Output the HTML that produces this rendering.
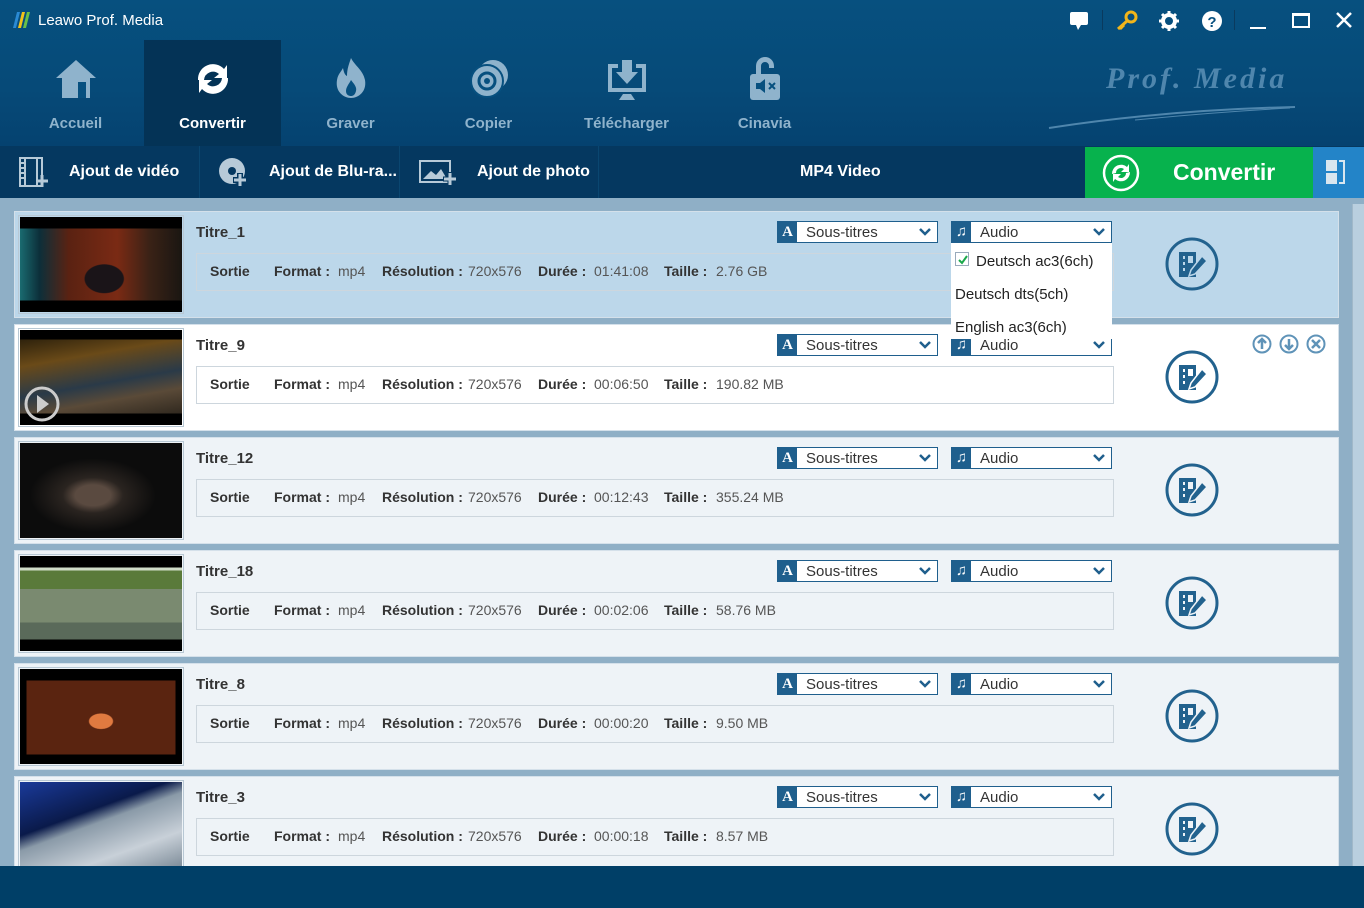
<!DOCTYPE html>
<html><head><meta charset="utf-8"><style>
*{margin:0;padding:0;box-sizing:border-box}
body{width:1364px;height:908px;overflow:hidden;font-family:"Liberation Sans",sans-serif;background:#8fafc6;position:relative}
.abs{position:absolute}
#top{left:0;top:0;width:1364px;height:146px;background:linear-gradient(#07507f,#064a78 60%,#054270)}
.nav{position:absolute;top:40px;width:137px;height:106px;text-align:center;color:#8fb3cc;font-weight:bold;font-size:15px}
.nav .lbl{position:absolute;left:0;right:0;top:75px}
.nav svg{position:absolute;left:46px;top:16px}
#tb{left:0;top:146px;width:1364px;height:52px;background:#053860}
.tbi{position:absolute;top:0;height:52px;border-right:1px solid #0a4670;color:#fff;font-weight:bold;font-size:16px;line-height:52px}
.row{position:absolute;left:14px;width:1325px;height:107px;background:#eef3f7;border:1px solid #d4e0ea}
.thumb{position:absolute;left:3px;top:3px;width:166px;height:99px;border:1px solid #b8c8d4;padding:1px}
.thumb div{width:162px;height:95px}
.title{position:absolute;left:181px;top:12px;font-weight:bold;font-size:15px;color:#333}
.dd{position:absolute;top:9px;width:161px;height:22px;background:#fff;border:1px solid #1f5f8d}
.dd .ic{position:absolute;left:0;top:0;width:19px;height:20px;background:#1f5f8d;color:#fff;font-family:"Liberation Serif",serif;font-weight:bold;font-size:15px;text-align:center;line-height:20px}
.dd .t{position:absolute;left:28px;top:2px;font-size:15px;color:#333}
.dd svg{position:absolute;right:6px;top:6px}
.info{position:absolute;left:181px;top:41px;width:918px;height:38px;border:1px solid #cdd6dd;font-size:14px;color:#333;line-height:34px}
.info span{position:absolute;top:0}
.b{font-weight:bold}
.v{color:#555}
.edit{position:absolute;left:1150px;top:25px}
</style></head><body>
<div id="top" class="abs">
 <svg class="abs" style="left:12px;top:11px" width="20" height="18"><path d="M1 17L5 1h3L4 17z" fill="#2a8ad4"/><path d="M6 17L10 1h3L9 17z" fill="#f3c21a"/><path d="M11 17L15 1h3L14 17z" fill="#6ac04a"/></svg>
 <div class="abs" style="left:38px;top:12px;color:#fff;font-size:15px">Leawo Prof. Media</div>
 <svg class="abs" style="left:1068px;top:10px" width="24" height="22"><rect x="2" y="2" width="18" height="13" rx="2" fill="#fff"/><path d="M8 15l2 5 3-5z" fill="#fff"/></svg>
 <div class="abs" style="left:1102px;top:10px;width:1px;height:20px;background:#0a3a5e"></div>
 <svg class="abs" style="left:1115px;top:9px" width="24" height="22"><circle cx="16" cy="8" r="5" fill="none" stroke="#f2b51a" stroke-width="3"/><path d="M12 12l-9 8M5 18l2 2M7 16l2 2" stroke="#f2b51a" stroke-width="3"/></svg>
 <svg class="abs" style="left:1158px;top:10px" width="22" height="22"><circle cx="11" cy="11" r="6" fill="none" stroke="#fff" stroke-width="4"/><g stroke="#fff" stroke-width="3"><path d="M11 1v4M11 17v4M1 11h4M17 11h4M4 4l3 3M15 15l3 3M4 18l3-3M15 7l3-3"/></g></svg>
 <svg class="abs" style="left:1201px;top:10px" width="22" height="22"><circle cx="11" cy="11" r="10" fill="#fff"/><text x="11" y="17" text-anchor="middle" font-family="Liberation Sans" font-weight="bold" font-size="15" fill="#07507f">?</text></svg>
 <div class="abs" style="left:1234px;top:10px;width:1px;height:20px;background:#0a3a5e"></div>
 <div class="abs" style="left:1250px;top:27px;width:16px;height:2px;background:#fff"></div>
 <div class="abs" style="left:1292px;top:13px;width:18px;height:15px;border:2px solid #fff;border-top-width:3px"></div>
 <svg class="abs" style="left:1335px;top:11px" width="18" height="18"><path d="M2 2L16 16M16 2L2 16" stroke="#fff" stroke-width="2.5"/></svg>
 <div class="abs" style="left:1106px;top:62px;color:#4f86ad;font-family:'Liberation Serif',serif;font-style:italic;font-weight:bold;font-size:30px;letter-spacing:3px">Prof. Media</div>
 <svg class="abs" style="left:1045px;top:100px" width="260" height="32"><path d="M4 28Q120 10 250 7" stroke="#4f86ad" stroke-width="2" fill="none"/><path d="M90 20Q170 12 245 8" stroke="#4f86ad" stroke-width="1" fill="none"/></svg>

 <div class="nav" style="left:7px"><svg width="46" height="46" viewBox="0 0 46 46"><path d="M23 4L3 22h6v20h28V22h6z" fill="#8fb3cc"/><rect x="25" y="26" width="8" height="16" fill="#07507f"/></svg><div class="lbl">Accueil</div></div>
 <div class="nav" style="left:144px;background:#043356;color:#fff"><svg width="46" height="46" viewBox="0 0 46 46"><path d="M8 24a15 15 0 0 1 26-11l3-4v13H24l5-4a9 9 0 0 0-15 6z" fill="#fff"/><path d="M38 22a15 15 0 0 1-26 11l-3 4V24h13l-5 4a9 9 0 0 0 15-6z" fill="#fff"/></svg><div class="lbl">Convertir</div></div>
 <div class="nav" style="left:282px"><svg width="46" height="46" viewBox="0 0 46 46"><path d="M23 2c4 8 12 12 14 22 2 12-7 18-14 18S7 36 9 24c1-6 4-8 6-12 1 5 2 7 4 8 0-7 2-12 4-18z" fill="#8fb3cc"/><path d="M23 24c3 4 6 7 5 11s-3 5-5 5-5-1-5-5 3-7 5-11z" fill="#07507f"/></svg><div class="lbl">Graver</div></div>
 <div class="nav" style="left:420px"><svg width="46" height="46" viewBox="0 0 46 46"><circle cx="27" cy="19" r="15" fill="#8fb3cc"/><circle cx="21" cy="25" r="16" fill="#8fb3cc" stroke="#07507f" stroke-width="2"/><circle cx="21" cy="25" r="8" fill="none" stroke="#07507f" stroke-width="3"/><circle cx="21" cy="25" r="3" fill="#07507f"/></svg><div class="lbl">Copier</div></div>
 <div class="nav" style="left:558px"><svg width="46" height="46" viewBox="0 0 46 46"><path d="M4 8h10v4H8v20h30V12h-6V8h10v28H4z" fill="#8fb3cc"/><path d="M18 4h10v12h6L23 28 12 16h6z" fill="#8fb3cc"/><path d="M15 44l4-6h8l4 6z" fill="#8fb3cc"/></svg><div class="lbl">Télécharger</div></div>
 <div class="nav" style="left:696px"><svg width="46" height="46" viewBox="0 0 46 46"><path d="M14 18V10a9 9 0 0 1 18 0v2h-5v-2a4 4 0 0 0-8 0v8z" fill="#8fb3cc"/><rect x="8" y="18" width="30" height="26" rx="3" fill="#8fb3cc"/><path d="M14 27h4l5-4v14l-5-4h-4z" fill="#07507f"/><path d="M27 27l6 6M33 27l-6 6" stroke="#07507f" stroke-width="2"/></svg><div class="lbl">Cinavia</div></div>
</div>

<div id="tb" class="abs">
 <div class="tbi" style="left:0;width:200px"><svg class="abs" style="left:18px;top:11px" width="32" height="32"><rect x="2" y="1" width="22" height="28" fill="none" stroke="#b7cad8" stroke-width="2"/><path d="M7 1v28M19 1v28" stroke="#b7cad8" stroke-width="2"/><path d="M2 6h5M2 11h5M2 16h5M2 21h5" stroke="#b7cad8" stroke-width="2"/><path d="M24 18v12M18 24h12" stroke="#b7cad8" stroke-width="3"/></svg><span style="position:absolute;left:69px">Ajout de vidéo</span></div>
 <div class="tbi" style="left:200px;width:200px"><svg class="abs" style="left:18px;top:11px" width="32" height="32"><circle cx="14" cy="14" r="13" fill="#b7cad8"/><circle cx="14" cy="14" r="4" fill="#053860"/><path d="M22 16v14M15 23h14" stroke="#053860" stroke-width="6"/><path d="M22 17v12M16 23h12" stroke="#b7cad8" stroke-width="3"/></svg><span style="position:absolute;left:69px">Ajout de Blu-ra...</span></div>
 <div class="tbi" style="left:400px;width:199px"><svg class="abs" style="left:18px;top:12px" width="40" height="30"><rect x="2" y="3" width="30" height="21" fill="none" stroke="#b7cad8" stroke-width="2"/><path d="M5 21l8-8 5 4 5-6 6 10z" fill="#b7cad8"/><path d="M32 14v14M25 21h14" stroke="#053860" stroke-width="5"/><path d="M32 15v12M26 21h12" stroke="#b7cad8" stroke-width="3"/></svg><span style="position:absolute;left:77px">Ajout de photo</span></div>
 <div class="abs" style="left:800px;top:0;line-height:52px;color:#fff;font-weight:bold;font-size:16px">MP4 Video</div>
 <div class="abs" style="left:1085px;top:1px;width:228px;height:51px;background:#07b24d"><svg class="abs" style="left:17px;top:7px" width="38" height="38"><circle cx="19" cy="19" r="17" fill="none" stroke="#fff" stroke-width="2.5"/><path d="M10 20a9 9 0 0 1 15-7l2-3v8h-8l3-3a5 5 0 0 0-8 4z" fill="#fff"/><path d="M28 18a9 9 0 0 1-15 7l-2 3v-8h8l-3 3a5 5 0 0 0 8-4z" fill="#fff"/></svg><span class="abs" style="left:88px;top:0;line-height:51px;color:#fff;font-weight:bold;font-size:23px">Convertir</span></div>
 <div class="abs" style="left:1313px;top:1px;width:51px;height:51px;background:#2384c8"><div class="abs" style="left:13px;top:13px;width:11px;height:11px;background:#d9e6ef"></div><div class="abs" style="left:13px;top:26px;width:11px;height:11px;background:#d9e6ef"></div><div class="abs" style="left:26px;top:13px;width:6px;height:24px;border:2px solid #d9e6ef;border-left:none"></div></div>
</div>

<div class="abs" style="left:1352px;top:204px;width:12px;height:662px;background:#b9cfdf;border-left:1px solid #a0b8c9"></div>

<div class="row" style="top:211px;background:#bcd7ea">
 <div class="thumb"><div style="background:linear-gradient(#000 0 12%,transparent 12% 88%,#000 88%),radial-gradient(ellipse at 52% 65%,#1a1418 0 16%,transparent 17%),linear-gradient(90deg,#1a6b70 0%,#0c2f3a 12%,#5a2212 30%,#7a2a14 60%,#3a2216 80%,#1a1612)"></div></div>
 <div class="title">Titre_1</div>
 <div class="dd" style="left:762px"><div class="ic">A</div><div class="t">Sous-titres</div><svg width="12" height="8"><path d="M1 1l5 5 5-5" stroke="#1f5f8d" stroke-width="2.5" fill="none"/></svg></div>
 <div class="dd" style="left:936px"><div class="ic">♫</div><div class="t">Audio</div><svg width="12" height="8"><path d="M1 1l5 5 5-5" stroke="#1f5f8d" stroke-width="2.5" fill="none"/></svg></div>
 <div class="info"><span class="b" style="left:13px">Sortie</span><span class="b" style="left:77px">Format :</span><span class="v" style="left:141px">mp4</span><span class="b" style="left:185px">Résolution :</span><span class="v" style="left:271px">720x576</span><span class="b" style="left:341px">Durée :</span><span class="v" style="left:397px">01:41:08</span><span class="b" style="left:467px">Taille :</span><span class="v" style="left:519px">2.76 GB</span></div>
 <svg class="edit" width="56" height="56"><circle cx="27" cy="27" r="25" fill="none" stroke="#22628e" stroke-width="3"/><rect x="14" y="15" width="17" height="25" fill="#22628e"/><path d="M18 19h2v3h-2zM18 25h2v3h-2zM18 31h2v3h-2zM23 19h5v7h-5z" fill="#bcd7ea"/><path d="M37 19l5 5-12 13-6 2 2-6z" fill="#22628e" stroke="#bcd7ea" stroke-width="1.5"/></svg>
</div>

<div class="row" style="top:324px;background:#fff">
 <div class="thumb"><div style="position:relative;background:linear-gradient(#000 0 10%,transparent 10% 88%,#000 88%),linear-gradient(170deg,#1a1408 0%,#6a4a18 30%,#2a3a48 55%,#5a4a38 70%,#1e1a14 100%)"><svg style="position:absolute;left:3px;top:55px" width="38" height="38"><circle cx="19" cy="19" r="16" fill="none" stroke="#ccc" stroke-width="3"/><path d="M14 10l12 9-12 9z" fill="#ccc"/></svg></div></div>
 <div class="title">Titre_9</div>
 <div class="dd" style="left:762px"><div class="ic">A</div><div class="t">Sous-titres</div><svg width="12" height="8"><path d="M1 1l5 5 5-5" stroke="#1f5f8d" stroke-width="2.5" fill="none"/></svg></div>
 <div class="dd" style="left:936px"><div class="ic">♫</div><div class="t">Audio</div><svg width="12" height="8"><path d="M1 1l5 5 5-5" stroke="#1f5f8d" stroke-width="2.5" fill="none"/></svg></div>
 <div class="info"><span class="b" style="left:13px">Sortie</span><span class="b" style="left:77px">Format :</span><span class="v" style="left:141px">mp4</span><span class="b" style="left:185px">Résolution :</span><span class="v" style="left:271px">720x576</span><span class="b" style="left:341px">Durée :</span><span class="v" style="left:397px">00:06:50</span><span class="b" style="left:467px">Taille :</span><span class="v" style="left:519px">190.82 MB</span></div>
 <svg class="abs" style="left:1236px;top:9px" width="80" height="22"><g fill="none" stroke="#5f93b8" stroke-width="2"><circle cx="11" cy="10" r="8.5"/><circle cx="38" cy="10" r="8.5"/><circle cx="65" cy="10" r="8.5"/><path d="M11 15V5M7 9l4-4 4 4M38 5v10M34 11l4 4 4-4M61 6l8 8M69 6l-8 8" stroke-width="2.5"/></g></svg>
 <svg class="edit" width="56" height="56"><circle cx="27" cy="27" r="25" fill="none" stroke="#22628e" stroke-width="3"/><rect x="14" y="15" width="17" height="25" fill="#22628e"/><path d="M18 19h2v3h-2zM18 25h2v3h-2zM18 31h2v3h-2zM23 19h5v7h-5z" fill="#fff"/><path d="M37 19l5 5-12 13-6 2 2-6z" fill="#22628e" stroke="#fff" stroke-width="1.5"/></svg>
</div>

<div class="row" style="top:437px">
 <div class="thumb"><div style="background:radial-gradient(ellipse at 45% 55%,#5a4a40 0 14%,#2a2420 24%,#0c0c0c 50%),#000"></div></div>
 <div class="title">Titre_12</div>
 <div class="dd" style="left:762px"><div class="ic">A</div><div class="t">Sous-titres</div><svg width="12" height="8"><path d="M1 1l5 5 5-5" stroke="#1f5f8d" stroke-width="2.5" fill="none"/></svg></div>
 <div class="dd" style="left:936px"><div class="ic">♫</div><div class="t">Audio</div><svg width="12" height="8"><path d="M1 1l5 5 5-5" stroke="#1f5f8d" stroke-width="2.5" fill="none"/></svg></div>
 <div class="info"><span class="b" style="left:13px">Sortie</span><span class="b" style="left:77px">Format :</span><span class="v" style="left:141px">mp4</span><span class="b" style="left:185px">Résolution :</span><span class="v" style="left:271px">720x576</span><span class="b" style="left:341px">Durée :</span><span class="v" style="left:397px">00:12:43</span><span class="b" style="left:467px">Taille :</span><span class="v" style="left:519px">355.24 MB</span></div>
 <svg class="edit" width="56" height="56"><circle cx="27" cy="27" r="25" fill="none" stroke="#22628e" stroke-width="3"/><rect x="14" y="15" width="17" height="25" fill="#22628e"/><path d="M18 19h2v3h-2zM18 25h2v3h-2zM18 31h2v3h-2zM23 19h5v7h-5z" fill="#eef3f7"/><path d="M37 19l5 5-12 13-6 2 2-6z" fill="#22628e" stroke="#eef3f7" stroke-width="1.5"/></svg>
</div>

<div class="row" style="top:550px">
 <div class="thumb"><div style="background:linear-gradient(#000 0 12%,transparent 12% 88%,#000 88%),linear-gradient(#d0dcc8 0 15%,#5a7a3a 15% 35%,#7a8a70 35% 70%,#5a6a5a 70%)"></div></div>
 <div class="title">Titre_18</div>
 <div class="dd" style="left:762px"><div class="ic">A</div><div class="t">Sous-titres</div><svg width="12" height="8"><path d="M1 1l5 5 5-5" stroke="#1f5f8d" stroke-width="2.5" fill="none"/></svg></div>
 <div class="dd" style="left:936px"><div class="ic">♫</div><div class="t">Audio</div><svg width="12" height="8"><path d="M1 1l5 5 5-5" stroke="#1f5f8d" stroke-width="2.5" fill="none"/></svg></div>
 <div class="info"><span class="b" style="left:13px">Sortie</span><span class="b" style="left:77px">Format :</span><span class="v" style="left:141px">mp4</span><span class="b" style="left:185px">Résolution :</span><span class="v" style="left:271px">720x576</span><span class="b" style="left:341px">Durée :</span><span class="v" style="left:397px">00:02:06</span><span class="b" style="left:467px">Taille :</span><span class="v" style="left:519px">58.76 MB</span></div>
 <svg class="edit" width="56" height="56"><circle cx="27" cy="27" r="25" fill="none" stroke="#22628e" stroke-width="3"/><rect x="14" y="15" width="17" height="25" fill="#22628e"/><path d="M18 19h2v3h-2zM18 25h2v3h-2zM18 31h2v3h-2zM23 19h5v7h-5z" fill="#eef3f7"/><path d="M37 19l5 5-12 13-6 2 2-6z" fill="#22628e" stroke="#eef3f7" stroke-width="1.5"/></svg>
</div>

<div class="row" style="top:663px">
 <div class="thumb"><div style="background:radial-gradient(ellipse at 50% 55%,#e07a40 0 10%,transparent 11%),linear-gradient(#000 0 12%,transparent 12% 90%,#000 90%),linear-gradient(90deg,#000 0 4%,#5a2410 4% 96%,#000 96%)"></div></div>
 <div class="title">Titre_8</div>
 <div class="dd" style="left:762px"><div class="ic">A</div><div class="t">Sous-titres</div><svg width="12" height="8"><path d="M1 1l5 5 5-5" stroke="#1f5f8d" stroke-width="2.5" fill="none"/></svg></div>
 <div class="dd" style="left:936px"><div class="ic">♫</div><div class="t">Audio</div><svg width="12" height="8"><path d="M1 1l5 5 5-5" stroke="#1f5f8d" stroke-width="2.5" fill="none"/></svg></div>
 <div class="info"><span class="b" style="left:13px">Sortie</span><span class="b" style="left:77px">Format :</span><span class="v" style="left:141px">mp4</span><span class="b" style="left:185px">Résolution :</span><span class="v" style="left:271px">720x576</span><span class="b" style="left:341px">Durée :</span><span class="v" style="left:397px">00:00:20</span><span class="b" style="left:467px">Taille :</span><span class="v" style="left:519px">9.50 MB</span></div>
 <svg class="edit" width="56" height="56"><circle cx="27" cy="27" r="25" fill="none" stroke="#22628e" stroke-width="3"/><rect x="14" y="15" width="17" height="25" fill="#22628e"/><path d="M18 19h2v3h-2zM18 25h2v3h-2zM18 31h2v3h-2zM23 19h5v7h-5z" fill="#eef3f7"/><path d="M37 19l5 5-12 13-6 2 2-6z" fill="#22628e" stroke="#eef3f7" stroke-width="1.5"/></svg>
</div>

<div class="row" style="top:776px">
 <div class="thumb"><div style="background:linear-gradient(160deg,#1a3a9a 0%,#0a1a4a 35%,#8a9aa8 45%,#c8d0d8 70%,#6a7a88 100%)"></div></div>
 <div class="title">Titre_3</div>
 <div class="dd" style="left:762px"><div class="ic">A</div><div class="t">Sous-titres</div><svg width="12" height="8"><path d="M1 1l5 5 5-5" stroke="#1f5f8d" stroke-width="2.5" fill="none"/></svg></div>
 <div class="dd" style="left:936px"><div class="ic">♫</div><div class="t">Audio</div><svg width="12" height="8"><path d="M1 1l5 5 5-5" stroke="#1f5f8d" stroke-width="2.5" fill="none"/></svg></div>
 <div class="info"><span class="b" style="left:13px">Sortie</span><span class="b" style="left:77px">Format :</span><span class="v" style="left:141px">mp4</span><span class="b" style="left:185px">Résolution :</span><span class="v" style="left:271px">720x576</span><span class="b" style="left:341px">Durée :</span><span class="v" style="left:397px">00:00:18</span><span class="b" style="left:467px">Taille :</span><span class="v" style="left:519px">8.57 MB</span></div>
 <svg class="edit" width="56" height="56"><circle cx="27" cy="27" r="25" fill="none" stroke="#22628e" stroke-width="3"/><rect x="14" y="15" width="17" height="25" fill="#22628e"/><path d="M18 19h2v3h-2zM18 25h2v3h-2zM18 31h2v3h-2zM23 19h5v7h-5z" fill="#eef3f7"/><path d="M37 19l5 5-12 13-6 2 2-6z" fill="#22628e" stroke="#eef3f7" stroke-width="1.5"/></svg>
</div>

<div class="abs" style="left:951px;top:243px;width:161px;height:96px;background:#fff;font-size:15px;color:#222">
 <div class="abs" style="left:4px;top:9px;width:14px;height:14px;border:1px solid #9ab;background:#fff"><svg class="abs" style="left:1px;top:1px" width="12" height="12"><path d="M2 6l3 3 5-7" stroke="#1aa84a" stroke-width="2" fill="none"/></svg></div>
 <div class="abs" style="left:25px;top:10px">Deutsch ac3(6ch)</div>
 <div class="abs" style="left:4px;top:43px">Deutsch dts(5ch)</div>
 <div class="abs" style="left:4px;top:76px">English ac3(6ch)</div>
</div>

<div class="abs" style="left:0;top:866px;width:1364px;height:42px;background:#003f67"></div>
</body></html>
